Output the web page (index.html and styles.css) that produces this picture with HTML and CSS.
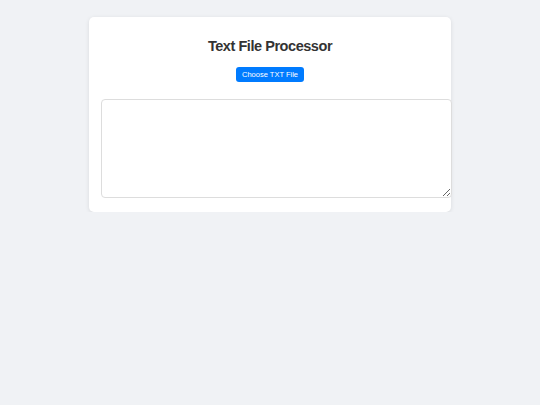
FILE: index.html
```html
<!DOCTYPE html>
<html>
<head>
<meta charset="utf-8">
<link rel="stylesheet" href="styles.css">
</head>
<body>
<div class="card">
  <h1 class="title">Text File Processor</h1>
  <div class="actions">
    <label class="btn">Choose TXT File</label>
  </div>
  <textarea class="output"></textarea>
</div>
</body>
</html>
```
FILE: styles.css
```css
html, body {
  margin: 0;
  padding: 0;
}
body {
  background: #f0f2f5;
  font-family: "Liberation Sans", Arial, sans-serif;
  padding-top: 17px;
}
.card {
  width: 338px;
  margin: 0 auto;
  background: #fff;
  border-radius: 5px;
  padding: 12px 12px 14px;
  box-shadow: 0 1px 4px rgba(0,0,0,0.1);
}
.title {
  margin: 9px 0 0;
  font-size: 14.5px;
  line-height: 17px;
  letter-spacing: -0.45px;
  text-align: center;
  color: #333;
  font-weight: bold;
}
.actions {
  margin-top: 12px;
  display: flex;
  justify-content: center;
}
.btn {
  display: block;
  width: 68px;
  height: 15px;
  line-height: 15px;
  background: #007bff;
  color: #fff;
  font-size: 7.5px;
  text-align: center;
  border-radius: 3px;
}
.output {
  display: block;
  margin-top: 17px;
  width: 337px;
  height: 85px;
  padding: 6px;
  border: 1px solid #ddd;
  border-radius: 4px;
  font-family: "Liberation Mono", monospace;
  font-size: 7px;
  background: #fff;
}
```
